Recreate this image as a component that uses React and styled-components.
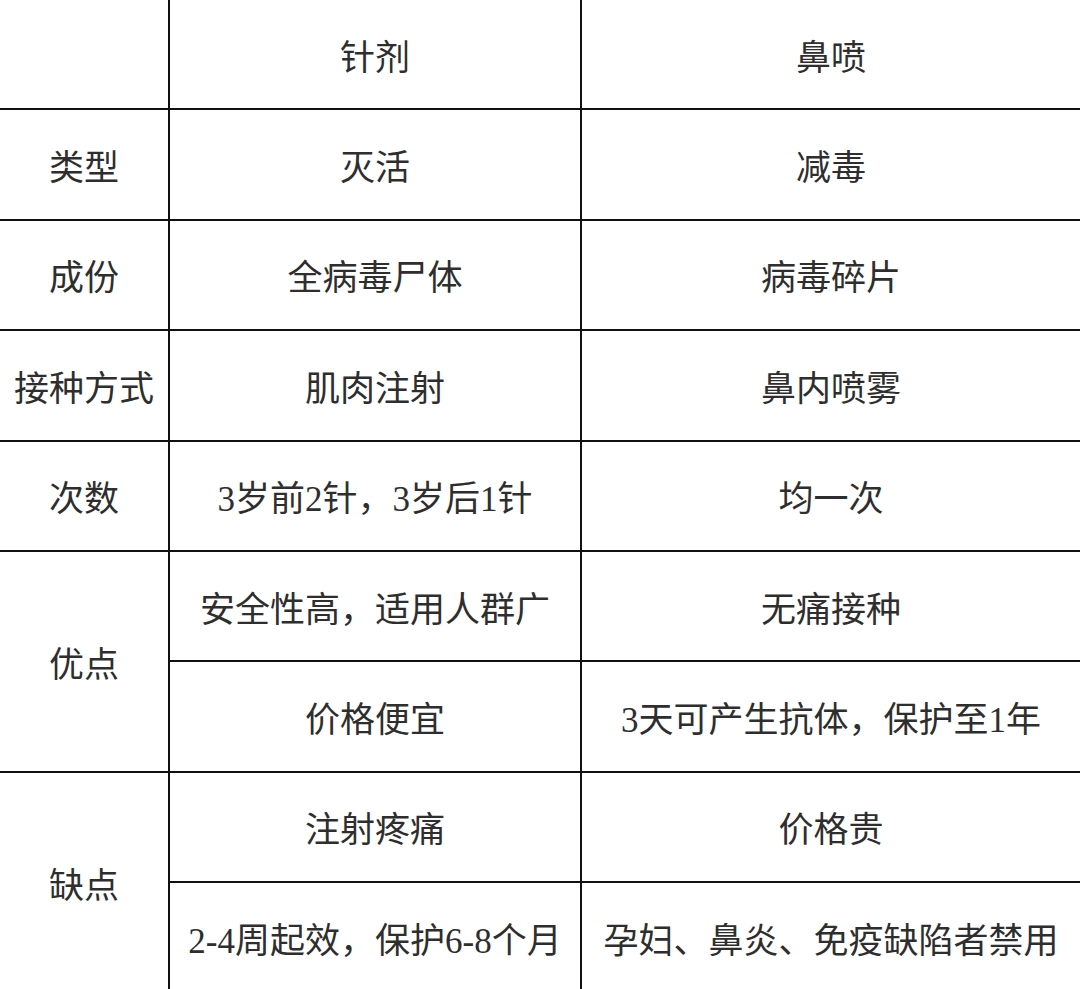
import React from 'react';
import styled, { createGlobalStyle } from 'styled-components';

const GlobalStyle = createGlobalStyle`
  html, body {
    margin: 0;
    padding: 0;
    background: #fff;
    overflow: hidden;
  }
`;

const Table = styled.div`
  display: grid;
  grid-template-columns: 170px 412px 1fr;
  grid-template-rows: repeat(9, 110.4px);
  width: 1080px;
  font-family: "Liberation Serif", "Noto Sans CJK SC", serif;
  font-size: 35px;
  color: #2e2e2e;
`;

const Cell = styled.div`
  display: flex;
  align-items: center;
  justify-content: center;
  box-sizing: border-box;
  white-space: nowrap;
  border-bottom: 2px solid #111;
  border-right: ${p => (p.last ? 'none' : '2px solid #111')};
  grid-row: ${p => (p.span ? `span ${p.span}` : 'auto')};
  grid-column: ${p => p.col || 'auto'};
`;

const rows = [
  ['', '针剂', '鼻喷'],
  ['类型', '灭活', '减毒'],
  ['成份', '全病毒尸体', '病毒碎片'],
  ['接种方式', '肌肉注射', '鼻内喷雾'],
  ['次数', '3岁前2针，3岁后1针', '均一次'],
];

const groups = [
  {
    label: '优点',
    items: [
      ['安全性高，适用人群广', '无痛接种'],
      ['价格便宜', '3天可产生抗体，保护至1年'],
    ],
  },
  {
    label: '缺点',
    items: [
      ['注射疼痛', '价格贵'],
      ['2-4周起效，保护6-8个月', '孕妇、鼻炎、免疫缺陷者禁用'],
    ],
  },
];

export default function App() {
  return (
    <>
      <GlobalStyle />
      <Table>
        {rows.map((r, i) => (
          <React.Fragment key={i}>
            <Cell>{r[0]}</Cell>
            <Cell>{r[1]}</Cell>
            <Cell last>{r[2]}</Cell>
          </React.Fragment>
        ))}
        {groups.map(g => (
          <React.Fragment key={g.label}>
            <Cell span={2} col={1}>{g.label}</Cell>
            {g.items.map((it, j) => (
              <React.Fragment key={j}>
                <Cell col={2}>{it[0]}</Cell>
                <Cell col={3} last>{it[1]}</Cell>
              </React.Fragment>
            ))}
          </React.Fragment>
        ))}
      </Table>
    </>
  );
}
